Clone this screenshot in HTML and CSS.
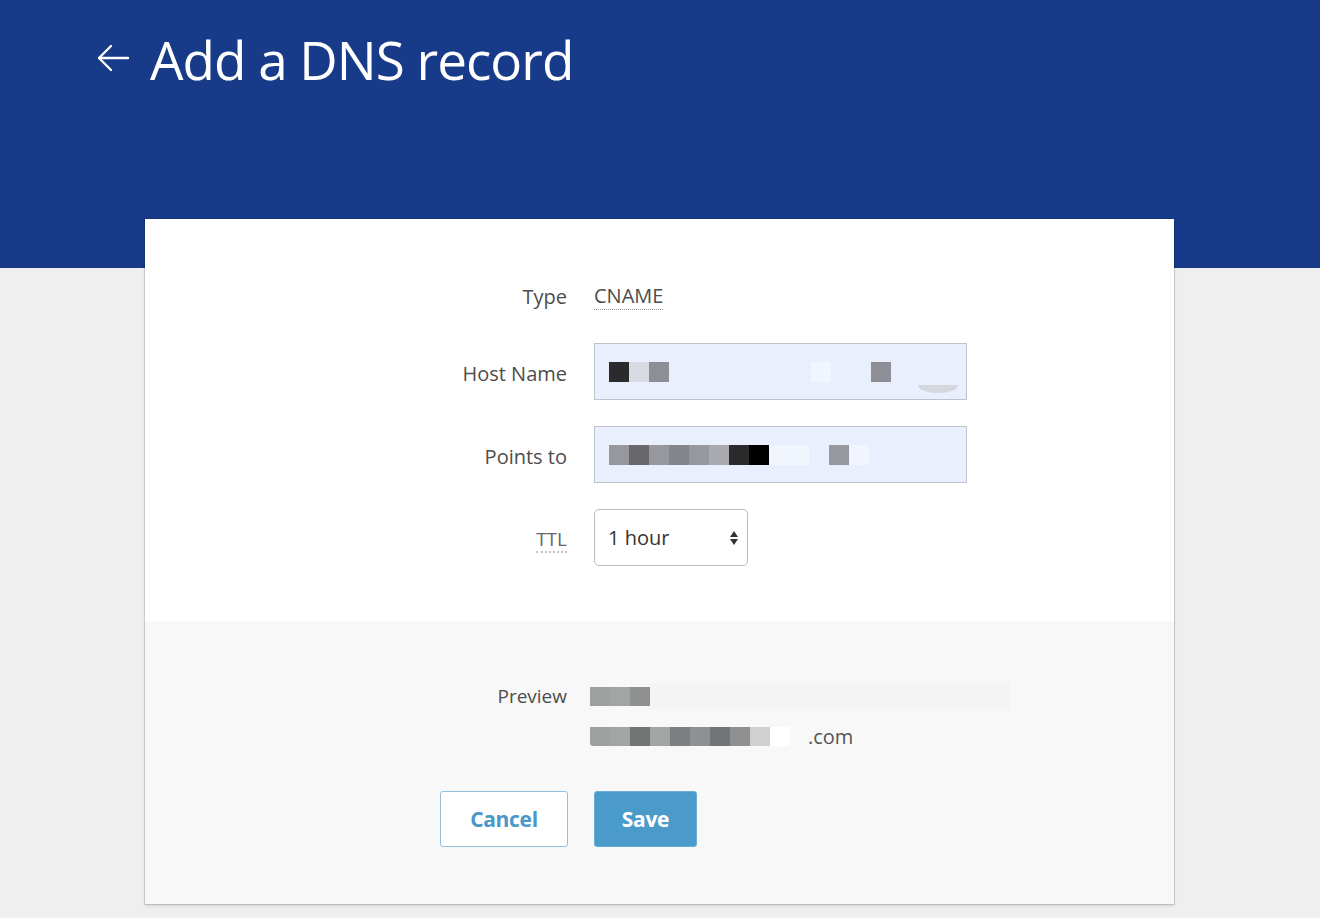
FILE: index.html
```html
<!DOCTYPE html>
<html>
<head>
<meta charset="utf-8">
<link rel="stylesheet" href="styles.css">
</head>
<body>
<header class="top">
  <div class="title-row">
    <svg class="back" width="34" height="30" viewBox="0 0 34 30"><path d="M32 15H3M15 3L3 15l12 12" fill="none" stroke="#fff" stroke-width="2.4" stroke-linecap="round" stroke-linejoin="round"/></svg>
    <h1>Add a DNS record</h1>
  </div>
</header>
<main class="card">
  <section class="fields">
    <div class="lbl type-row">Type</div>
    <div class="val type-row"><span class="dotted">CNAME</span></div>

    <div class="lbl in-row">Host Name</div>
    <div class="val in-row"><div class="input">
      <span class="px k2"></span><span class="px k8"></span><span class="px k5"></span>
      <span class="gap g1"></span><span class="px kf"></span>
      <span class="gap g2"></span><span class="px k5"></span>
      <span class="smudge"></span>
    </div></div>

    <div class="lbl in-row">Points to</div>
    <div class="val in-row"><div class="input">
      <span class="px k6"></span><span class="px k3"></span><span class="px k6"></span><span class="px k4"></span><span class="px k6"></span><span class="px k7"></span><span class="px k2"></span><span class="px k0"></span><span class="px kf"></span><span class="px kf"></span>
      <span class="gap g3"></span><span class="px k6"></span><span class="px kf"></span>
    </div></div>

    <div class="lbl in-row"><span class="dotted ttl">TTL</span></div>
    <div class="val in-row"><div class="select"><span>1 hour</span>
      <svg width="10" height="18" viewBox="0 0 10 18"><path d="M5 2L9 8H1Z M5 16L1 10H9Z" fill="#333"/></svg>
    </div></div>
  </section>
  <section class="preview">
    <div class="lbl pv">Preview</div>
    <div class="val pv-lines">
      <div class="pv-line"><span class="px p1"></span><span class="px p2"></span><span class="px p3"></span><span class="faint"></span></div>
      <div class="pv-line"><span class="px p1 r"></span><span class="px p2"></span><span class="px p4"></span><span class="px p2"></span><span class="px p5"></span><span class="px p3"></span><span class="px p4"></span><span class="px p3"></span><span class="px p6"></span><span class="px pw"></span><span class="com">.com</span></div>
    </div>
    <div class="btn-cell"><button class="btn cancel">Cancel</button></div>
    <div class="val"><button class="btn save">Save</button></div>
  </section>
</main>
</body>
</html>
```
FILE: styles.css
```css
html, body { margin: 0; padding: 0; }
body {
  background: #efefef;
  font-family: "Open Sans", "Noto Sans", sans-serif;
  color: #4a4a4a;
  height: 918px;
  overflow: hidden;
}
.top {
  background: #173b88;
  height: 268px;
  box-sizing: border-box;
  padding: 30px 0 0 96px;
}
.title-row { display: flex; align-items: center; gap: 20px; height: 60px; }
.back { display: block; margin-top: -4px; }
h1 {
  margin: 0;
  color: #fff;
  font-weight: 400;
  font-size: 53px;
  letter-spacing: -1px;
  line-height: 60px;
}
.card {
  width: 1029px;
  margin: -49px 0 0 145px;
  background: #fff;
  box-shadow: 0 0 0 1px rgba(0, 0, 40, 0.12), 0 2px 3px rgba(0, 0, 0, 0.12);
  position: relative;
}
.fields, .preview {
  display: grid;
  grid-template-columns: 422px 1fr;
  column-gap: 27px;
}
.fields {
  padding: 56px 0 55px;
  row-gap: 26px;
}
.lbl {
  text-align: right;
  font-size: 20px;
  color: #4d4d4d;
  display: flex;
  align-items: center;
  justify-content: flex-end;
}
.val { display: flex; align-items: center; font-size: 20px; color: #4d4d4d; }
.type-row { height: 42px; }
.in-row { height: 57px; }
.in-row.lbl { padding-top: 4px; box-sizing: border-box; }
.dotted { border-bottom: 1px dotted #9a9a9a; line-height: 26px; }
.ttl { color: #666; font-size: 19px; border-bottom: 2px dotted #c4c4c4; line-height: 24px; margin-top: 0; }
.input {
  width: 373px;
  height: 57px;
  box-sizing: border-box;
  background: #e9effd;
  border: 1.5px solid #bfc3cc;
  display: flex;
  align-items: center;
  padding-left: 14px;
  position: relative;
}
.px { width: 20px; height: 20px; display: block; }
.gap { display: block; height: 20px; }
.g1 { width: 142px; }
.g2 { width: 40px; }
.g3 { width: 20px; }
.k0 { background: #000; }
.k2 { background: #2b2b2d; }
.k3 { background: #68686c; }
.k4 { background: #84858a; }
.k5 { background: #8e8f96; }
.k6 { background: #97989e; }
.k7 { background: #a8aab0; }
.k8 { background: #d8dbe3; }
.kf { background: #f1f5fe; }
.smudge {
  position: absolute;
  right: 8px;
  bottom: 6px;
  width: 40px;
  height: 8px;
  border-bottom-left-radius: 20px 8px;
  border-bottom-right-radius: 20px 8px;
  background: #d4d7de;
}
.select {
  width: 154px;
  height: 57px;
  box-sizing: border-box;
  border: 1.5px solid #bdbdbd;
  border-radius: 5px;
  display: flex;
  align-items: center;
  justify-content: space-between;
  padding: 0 8px 0 13px;
  font-size: 20px;
  color: #333;
}
.preview {
  background: #f8f8f8;
  padding: 55px 0 57px;
}
.pv { height: 40px; align-items: center; font-size: 19px; }
.pv-lines { flex-direction: column; align-items: flex-start; margin-left: -4px; }
.pv-line { display: flex; align-items: center; height: 40px; }
.pv-line .px { height: 19px; }
.faint { display: block; width: 360px; height: 26px; background: #f4f4f4; }
.p1 { background: #9e9f9f; }
.p2 { background: #a3a4a4; }
.p3 { background: #8e9091; }
.p4 { background: #717375; }
.p5 { background: #7c7e80; }
.p6 { background: #d0d0d1; }
.pw { background: #fff; }
.r { border-bottom-left-radius: 3px; }
.com { margin-left: 18px; font-size: 20px; color: #555; }
.btn-cell { display: flex; justify-content: flex-end; margin-top: 35px; margin-right: -1px; }
.preview .val:last-child { margin-top: 35px; }
.btn {
  height: 56px;
  font-family: "Open Sans", "Noto Sans", sans-serif;
  font-size: 21px;
  font-weight: 700;
  border-radius: 3px;
  letter-spacing: -0.3px;
}
.cancel {
  width: 128px;
  background: #fff;
  color: #4b97c7;
  border: 1.5px solid #93bedb;
}
.save {
  width: 103px;
  background: #4a9bc9;
  color: #fff;
  border: 1.5px solid #6aaed6;
}
```
